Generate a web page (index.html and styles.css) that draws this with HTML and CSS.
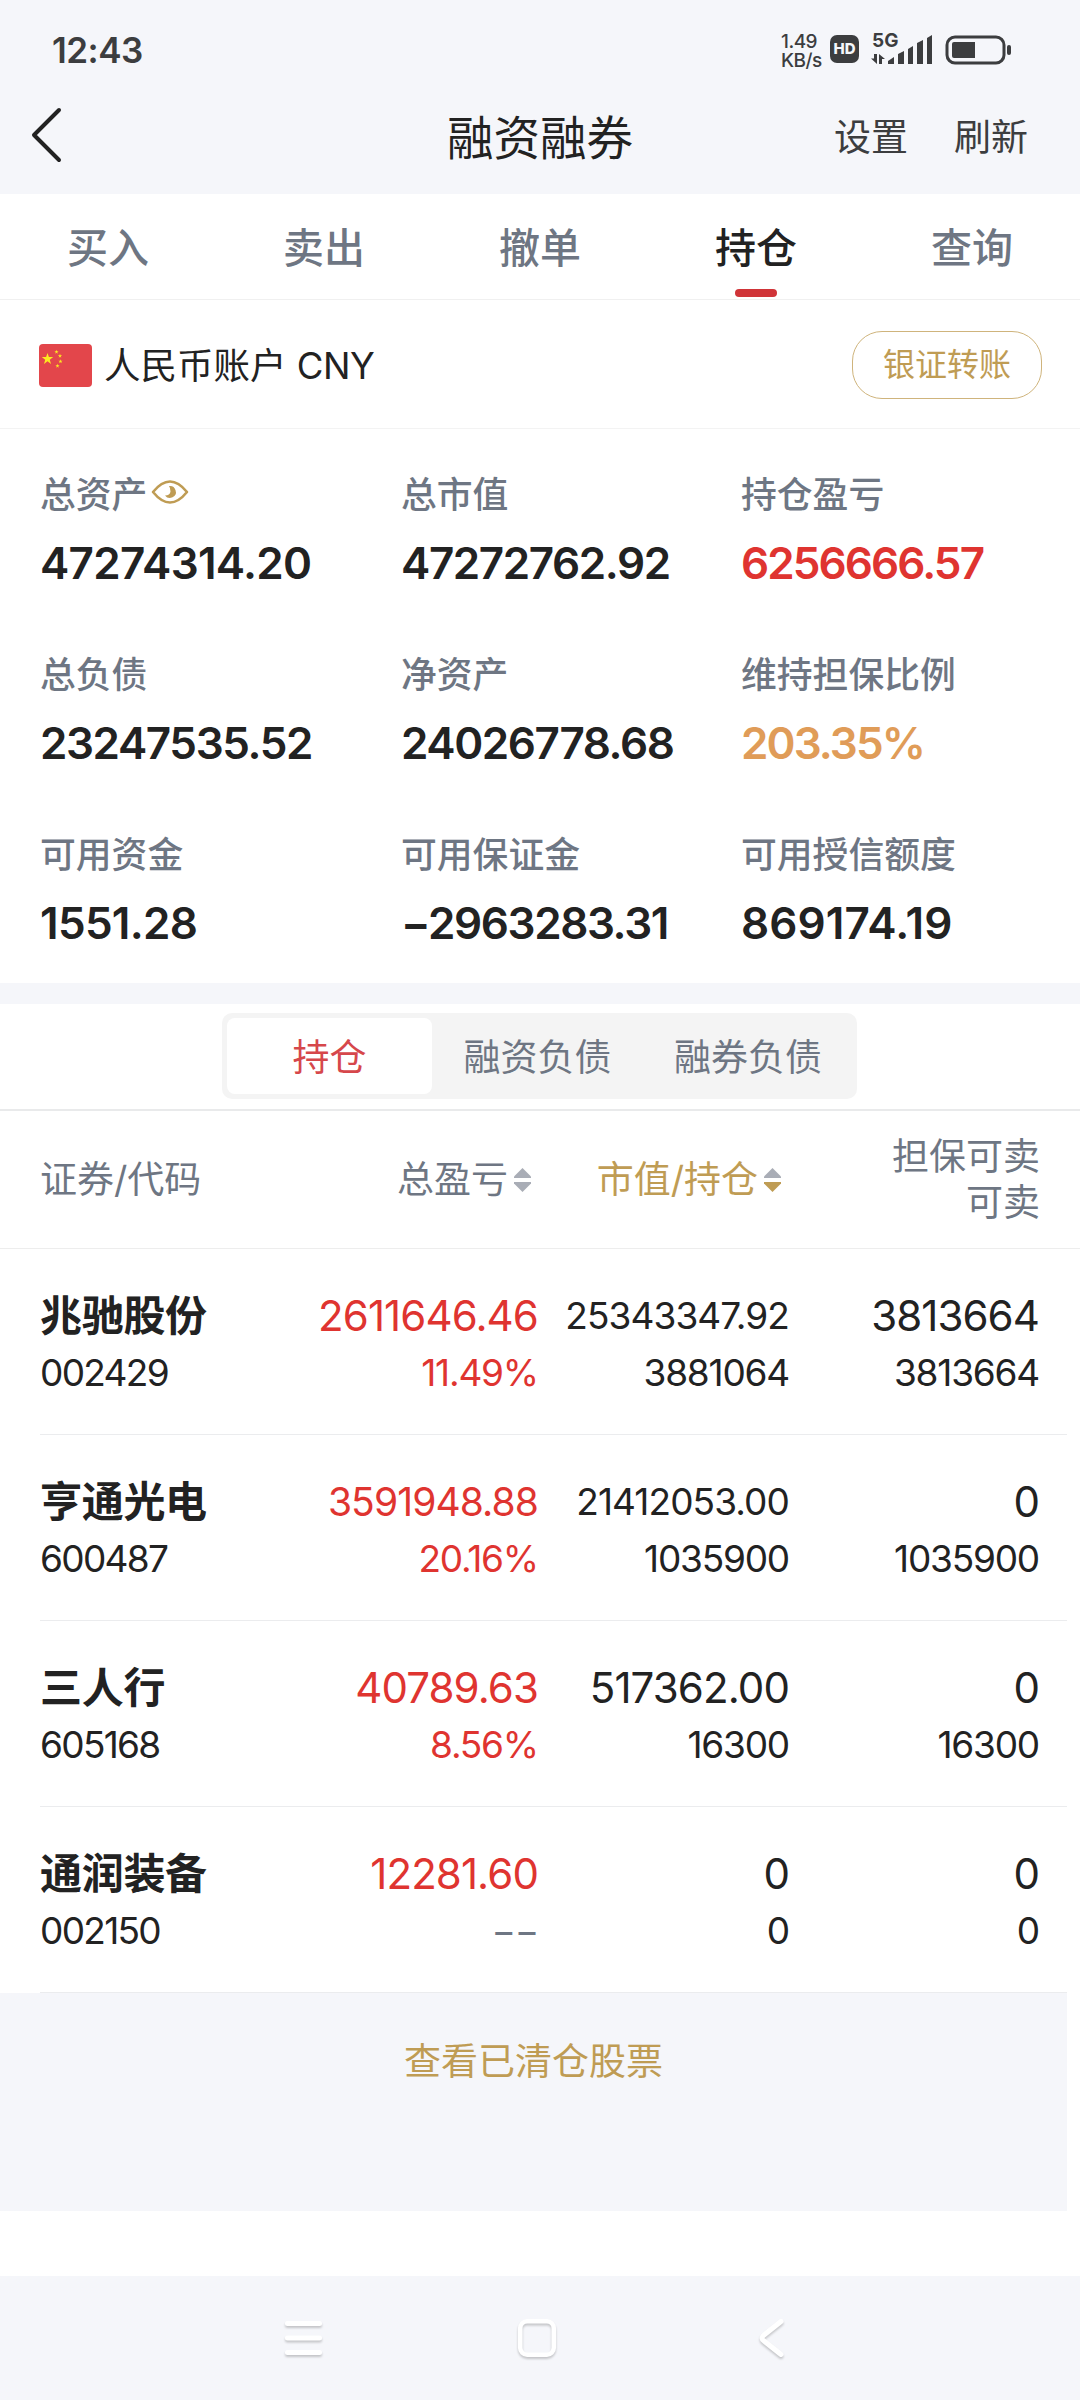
FILE: index.html
```html
<!DOCTYPE html>
<html lang="zh-CN">
<head>
  <meta charset="UTF-8">
  <meta name="viewport" content="width=device-width, initial-scale=1.0">
  <title>融资融券</title>
  <link rel="stylesheet" href="styles.css">
</head>
<body>
  <div class="status">
    <span class="time">12:43</span>
    <div class="status-right">
      <div class="speed"><span>1.49</span><span>KB/s</span></div>
      <span class="hd">HD</span>
      <div class="signal">
        <span class="net">5G</span>
        <svg width="61" height="32" viewBox="0 0 61 32" fill="#3c3d3f">
          <path d="M3 19h3v10L0 23.500h3zM8 29V19l6 5h-3v5z"/>
          <path d="M17 29v-3l6-4v7zM27 29V19l6-3v13zM37 29V14l5-3v18zM46 29V8l6-3v24zM56 29V3l5-3v29z"/>
        </svg>
      </div>
      <svg class="battery" width="68" height="32" viewBox="0 0 68 32">
        <rect x="2" y="2" width="57" height="26" rx="8" fill="none" stroke="#3c3d3f" stroke-width="3"/>
        <path d="M9 7h21v16H9a2 2 0 0 1-2-2V9a2 2 0 0 1 2-2z" fill="#3c3d3f"/>
        <rect x="62" y="10" width="4" height="10" rx="2" fill="#3c3d3f"/>
      </svg>
    </div>
  </div>

  <header class="navbar">
    <svg class="back" width="34" height="58" viewBox="0 0 34 58" fill="none" stroke="#222" stroke-width="4" stroke-linecap="round" stroke-linejoin="round"><path d="M30 4L5 29l25 25"/></svg>
    <h1>融资融券</h1>
    <div class="actions"><span>设置</span><span>刷新</span></div>
  </header>

  <nav class="tabs">
    <span>买入</span>
    <span>卖出</span>
    <span>撤单</span>
    <span class="active">持仓</span>
    <span>查询</span>
  </nav>

  <div class="account">
    <svg class="flag" width="53" height="43" viewBox="0 0 53 43">
      <defs><path id="star" d="M0-6L1.400-1.900 5.700-1.900 2.300.7 3.500 4.900 0 2.300-3.500 4.900-2.300.7-5.700-1.900-1.400-1.900z"/></defs>
      <rect width="53" height="43" rx="4" fill="#e3464b"/>
      <g fill="#fcea20">
        <use href="#star" transform="translate(8.500 15)"/>
        <use href="#star" transform="translate(17.500 8) scale(.36)"/>
        <use href="#star" transform="translate(21 12) scale(.36)"/>
        <use href="#star" transform="translate(21.500 17.500) scale(.36)"/>
        <use href="#star" transform="translate(18.500 22) scale(.36)"/>
      </g>
    </svg>
    <span class="account-name">人民币账户 <span class="cny">CNY</span></span>
    <span class="transfer">银证转账</span>
  </div>

  <div class="assets">
    <div class="asset">
      <div class="label">总资产<svg width="38" height="24" viewBox="0 0 38 24"><path d="M2 12Q19-9 36 12Q19 33 2 12z" fill="none" stroke="#bf9c54" stroke-width="2.600" stroke-linejoin="round"/><path d="M18 6a6 6 0 1 1-4 9.500q5 0 5.500-4Q19.500 8 18 6z" fill="#bf9c54"/></svg></div>
      <div class="value wide">47274314.20</div>
    </div>
    <div class="asset"><div class="label">总市值</div><div class="value">47272762.92</div></div>
    <div class="asset"><div class="label">持仓盈亏</div><div class="value red tight">6256666.57</div></div>
    <div class="asset"><div class="label">总负债</div><div class="value">23247535.52</div></div>
    <div class="asset"><div class="label">净资产</div><div class="value">24026778.68</div></div>
    <div class="asset"><div class="label">维持担保比例</div><div class="value orange tight">203.35%</div></div>
    <div class="asset"><div class="label">可用资金</div><div class="value wide">1551.28</div></div>
    <div class="asset"><div class="label">可用保证金</div><div class="value">−2963283.31</div></div>
    <div class="asset"><div class="label">可用授信额度</div><div class="value wider">869174.19</div></div>
  </div>

  <div class="segment-wrap">
    <div class="segment">
      <span class="active">持仓</span>
      <span>融资负债</span>
      <span>融券负债</span>
    </div>
  </div>

  <div class="thead">
    <div>证券/代码</div>
    <div class="sortable">总盈亏<svg width="17" height="24" viewBox="0 0 17 24"><path d="M8.500 0L17 8.500v1.500H0V8.500z" fill="#a9adb6"/><path d="M8.500 24L17 15.500V14H0v1.500z" fill="#a9adb6"/></svg></div>
    <div class="sortable gold">市值/持仓<svg width="17" height="24" viewBox="0 0 17 24"><path d="M8.500 0L17 8.500v1.500H0V8.500z" fill="#a9adb6"/><path d="M8.500 24L17 15.500V14H0v1.500z" fill="#bf9c54"/></svg></div>
    <div>担保可卖<br>可卖</div>
  </div>

  <div class="rows">
    <div class="row">
      <div class="stock"><b>兆驰股份</b><span>002429</span></div>
      <div class="red"><b>2611646.46</b><span>11.49%</span></div>
      <div><b class="small">25343347.92</b><span>3881064</span></div>
      <div><b>3813664</b><span>3813664</span></div>
    </div>
    <div class="row">
      <div class="stock"><b>亨通光电</b><span>600487</span></div>
      <div class="red"><b class="mid">3591948.88</b><span>20.16%</span></div>
      <div><b class="small">21412053.00</b><span>1035900</span></div>
      <div><b>0</b><span>1035900</span></div>
    </div>
    <div class="row">
      <div class="stock"><b>三人行</b><span>605168</span></div>
      <div class="red"><b>40789.63</b><span>8.56%</span></div>
      <div><b>517362.00</b><span>16300</span></div>
      <div><b>0</b><span>16300</span></div>
    </div>
    <div class="row">
      <div class="stock"><b>通润装备</b><span>002150</span></div>
      <div class="red"><b>12281.60</b><span class="none">−−</span></div>
      <div><b>0</b><span>0</span></div>
      <div><b>0</b><span>0</span></div>
    </div>
  </div>

  <div class="cleared">查看已清仓股票</div>

  <div class="sysnav">
    <svg width="40" height="44" viewBox="0 0 40 44" fill="none" stroke="#fff" stroke-width="5" stroke-linecap="round"><path d="M5.500 5.500h32M5.500 20h32M5.500 34.500h32"/></svg>
    <svg width="40" height="44" viewBox="0 0 40 44" fill="none" stroke="#fff" stroke-width="4.500"><rect x="3.200" y="3.200" width="33.600" height="33.600" rx="7"/></svg>
    <svg width="40" height="44" viewBox="0 0 40 44" fill="none" stroke="#fff" stroke-width="5" stroke-linecap="round" stroke-linejoin="round"><path d="M29 3.500L12 17q-4 3 0 6l17 13.500"/></svg>
  </div>
</body>
</html>
```
FILE: styles.css
```css
* {
    box-sizing: border-box;
}
body {
    margin: 0;
    width: 1080px;
    height: 2400px;
    background: #fff;
    color: #222;
    font-family: Inter, "Noto Sans CJK SC", sans-serif;
    display: flex;
    flex-direction: column;
    white-space: nowrap;
}
.red {
    color: #df3430;
}
.status {
    height: 100px;
    background: #f5f6fa;
    color: #3c3d3f;
    display: flex;
    justify-content: space-between;
    padding: 0 67px 0 52px;
}
.time {
    font-size: 35px;
    font-weight: 600;
    line-height: 101px;
    letter-spacing: -.5px;
}
.status-right {
    display: flex;
    align-items: flex-start;
    padding-top: 35px;
}
.speed {
    display: flex;
    flex-direction: column;
    width: 49px;
    margin-top: -3px;
    font-size: 19px;
    line-height: 19px;
    font-weight: 500;
    letter-spacing: -.5px;
}
.hd {
    width: 29px;
    height: 28px;
    border-radius: 7px;
    background: #3c3d3f;
    color: #f5f6fa;
    font-size: 15px;
    font-weight: 800;
    line-height: 28px;
    text-align: center;
}
.signal {
    position: relative;
    width: 61px;
    margin-left: 12px;
}
.net {
    position: absolute;
    left: 1px;
    top: -5px;
    font-size: 19px;
    font-weight: 700;
    line-height: 22px;
}
.battery {
    margin: 0 0 0 13px;
}
.navbar {
    height: 94px;
    background: #f5f6fa;
    display: grid;
    grid-template-columns: 300px 1fr 300px;
    padding: 0 52px 0 28px;
}
.back {
    margin: 6px 0 0 1px;
}
.navbar h1 {
    margin: 0;
    padding-left: 24px;
    font-size: 46.5px;
    font-weight: 400;
    line-height: 76px;
    text-align: center;
}
.actions {
    display: flex;
    justify-content: flex-end;
    gap: 46px;
    color: #3c3d3f;
    font-size: 37px;
    line-height: 76px;
}
.tabs {
    height: 106px;
    border-bottom: 1px solid #f0f0f0;
    display: grid;
    grid-template-columns: repeat(5, 1fr);
    text-align: center;
    color: #6e7683;
    font-size: 41px;
    font-weight: 500;
    line-height: 108px;
}
.tabs .active {
    color: #222;
    position: relative;
}
.tabs .active::after {
    content: "";
    position: absolute;
    left: 87px;
    top: 95px;
    width: 42px;
    height: 8px;
    border-radius: 4px;
    background: #d03438;
}
.account {
    height: 129px;
    border-bottom: 1px solid #f3f3f3;
    display: flex;
    align-items: center;
    padding: 2px 38px 0 39px;
}
.account-name {
    flex: 1;
    padding: 0 0 3px 12px;
    font-size: 36.5px;
}
.cny {
    letter-spacing: -.5px;
}
.transfer {
    width: 190px;
    height: 68px;
    border: 1px solid #cfb47c;
    border-radius: 30px;
    color: #bf9c54;
    font-size: 32px;
    line-height: 66px;
    text-align: center;
}
.assets {
    height: 554px;
    padding: 32px 0 0 40px;
    display: grid;
    grid-template-columns: 361px 340px 1fr;
    grid-template-rows: repeat(3, 180px);
}
.label {
    display: flex;
    align-items: center;
    gap: 4px;
    height: 62px;
    color: #6e7683;
    font-size: 35.8px;
    font-weight: 500;
}
.value {
    height: 78px;
    font-size: 44px;
    font-weight: 600;
    line-height: 80px;
    letter-spacing: -1.4px;
}
.tight {
    letter-spacing: -1.9px;
}
.wide {
    letter-spacing: -.7px;
}
.wider {
    letter-spacing: .1px;
}
.orange {
    color: #e09c58;
}
.segment-wrap {
    height: 128px;
    border-top: 21px solid #f5f6fa;
    border-bottom: 2px solid #e9eaeb;
    padding-top: 9px;
}
.segment {
    width: 635px;
    height: 86px;
    margin-left: 222px;
    padding: 5px;
    border-radius: 10px;
    background: #f4f4f4;
    display: grid;
    grid-template-columns: 205px 211px 210px;
    color: #6e7683;
    font-size: 37px;
    line-height: 79px;
    text-align: center;
}
.segment .active {
    height: 76px;
    background: #fff;
    border-radius: 8px;
    color: #d6474b;
}
.thead,
.row {
    display: grid;
    grid-template-columns: 200px 298px 251px 250px;
    text-align: right;
}
.thead {
    height: 138px;
    padding: 1px 0 0 40px;
    border-bottom: 1px solid #ededed;
    grid-template-columns: 200px 298px 250px 252px;
    align-items: center;
    color: #6e7683;
    font-size: 37px;
    line-height: 46px;
}
.thead div:first-child {
    text-align: left;
}
.sortable {
    display: flex;
    align-items: center;
    justify-content: flex-end;
    gap: 6px;
    padding-right: 7px;
}
.thead .gold {
    color: #bf9c54;
}
.rows {
    padding: 0 13px 0 40px;
}
.row {
    height: 186px;
    padding-top: 36px;
    border-bottom: 1px solid #ebecee;
}
.row > div {
    display: flex;
    flex-direction: column;
    height: 117px;
}
.row b {
    height: 61px;
    font-size: 42px;
    font-weight: 400;
    line-height: 61px;
    letter-spacing: -.9px;
}
.row span {
    height: 54px;
    font-size: 37px;
    line-height: 54px;
    letter-spacing: -1.2px;
}
.row .stock {
    text-align: left;
}
.row .stock b {
    font-weight: 700;
    letter-spacing: -.3px;
}
.row .stock span {
    letter-spacing: -1.7px;
}
.row .small {
    font-size: 37px;
}
.row .mid {
    font-size: 39px;
}
.row .none {
    color: #6e7683;
}
.cleared {
    width: 1067px;
    height: 218px;
    background: #f5f6fa;
    color: #bf9c54;
    font-size: 37px;
    line-height: 138px;
    text-align: center;
}
.sysnav {
    height: 124px;
    margin-top: 65px;
    background: #f5f6fa;
    display: flex;
    justify-content: center;
    gap: 195px;
    padding: 42px 6px 0 0;
}
.sysnav svg {
    filter: drop-shadow(0 2px 1px rgba(0, 0, 0, .2));
}
```
